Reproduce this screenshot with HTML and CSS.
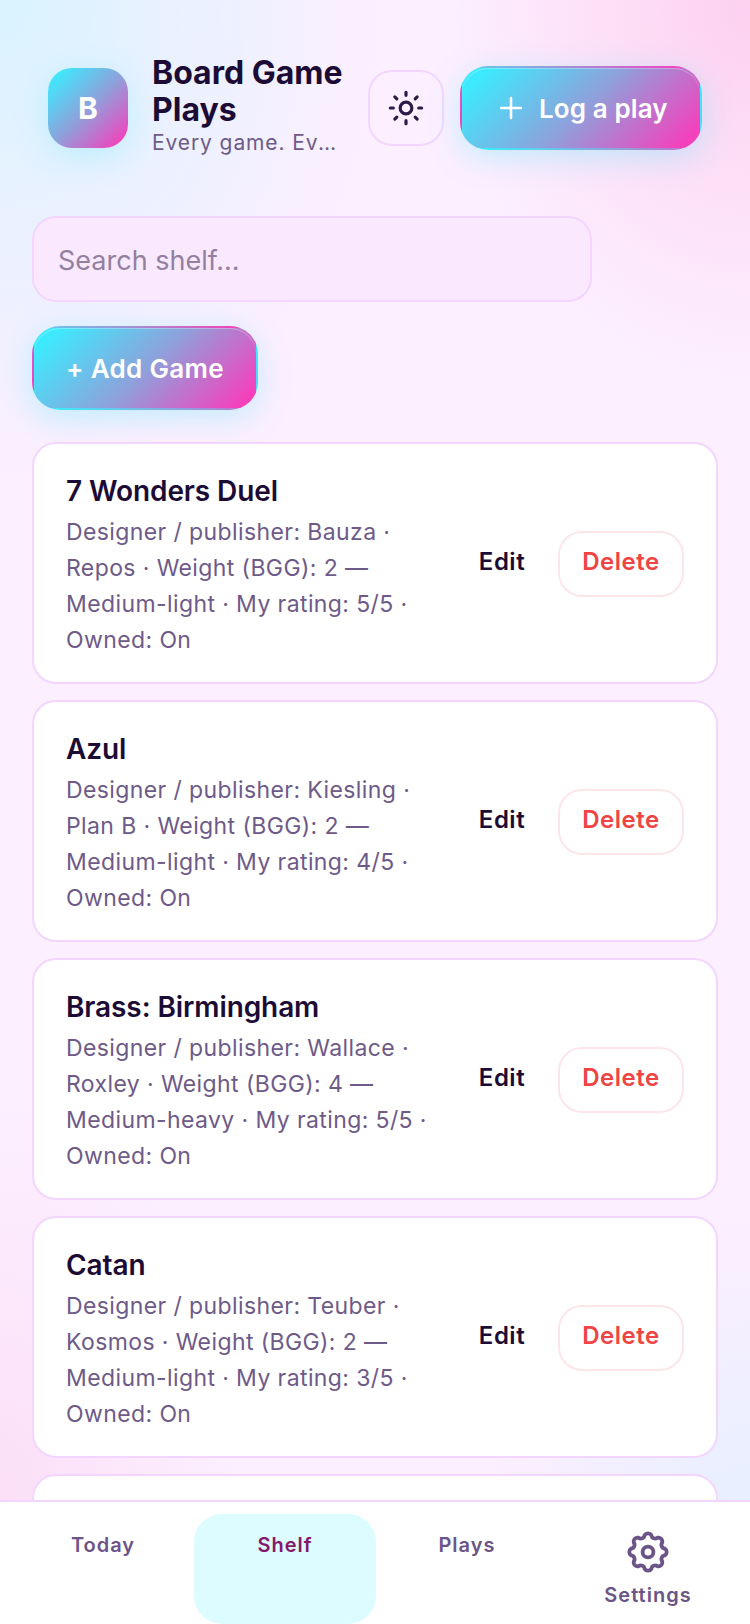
FILE: index.html
```html
<!DOCTYPE html>
<html lang="en">
<head>
  <meta charset="UTF-8">
  <meta name="viewport" content="width=device-width, initial-scale=1.0">
  <title>Board Game Plays</title>
  <link rel="stylesheet" href="styles.css">
</head>
<body>

  <div class="app">
    <main class="content">
      <header class="header">
        <div class="logo">B</div>
        <div class="brand">
          <h1>Board Game Plays</h1>
          <p>Every game. Every play.</p>
        </div>
        <button type="button" class="theme-button" aria-label="Theme">
          <svg width="40" height="40" viewBox="0 0 24 24" fill="none" stroke="#2a1a45" stroke-width="1.9" stroke-linecap="round">
            <circle cx="12" cy="12" r="3.5"/>
            <path d="M12 2.6v1.8M12 19.6v1.8M2.6 12h1.8M19.6 12h1.8M5.3 5.3l1.2 1.2M17.5 17.5l1.2 1.2M5.3 18.7l1.2-1.2M17.5 6.5l1.2-1.2"/>
          </svg>
        </button>
        <button type="button" class="grad-button log-button">
          <svg width="34" height="34" viewBox="0 0 24 24" fill="none" stroke="#fff" stroke-width="1.8" stroke-linecap="round">
            <path d="M5 12h14M12 5v14"/>
          </svg>
          Log a play
        </button>
      </header>

      <input class="search" type="text" placeholder="Search shelf...">

      <button type="button" class="grad-button add-button">+ Add Game</button>

      <section class="game-list">
        <article class="game-card">
          <div class="game-info">
            <h3>7 Wonders Duel</h3>
            <p>Designer / publisher: Bauza · Repos · Weight (BGG): 2 — Medium-light · My rating: 5/5 · Owned: On</p>
          </div>
          <button type="button" class="edit-button">Edit</button>
          <button type="button" class="delete-button">Delete</button>
        </article>
        <article class="game-card">
          <div class="game-info">
            <h3>Azul</h3>
            <p>Designer / publisher: Kiesling · Plan B · Weight (BGG): 2 — Medium-light · My rating: 4/5 · Owned: On</p>
          </div>
          <button type="button" class="edit-button">Edit</button>
          <button type="button" class="delete-button">Delete</button>
        </article>
        <article class="game-card">
          <div class="game-info">
            <h3>Brass: Birmingham</h3>
            <p>Designer / publisher: Wallace · Roxley · Weight (BGG): 4 — Medium-heavy · My rating: 5/5 · Owned: On</p>
          </div>
          <button type="button" class="edit-button">Edit</button>
          <button type="button" class="delete-button">Delete</button>
        </article>
        <article class="game-card">
          <div class="game-info">
            <h3>Catan</h3>
            <p>Designer / publisher: Teuber · Kosmos · Weight (BGG): 2 — Medium-light · My rating: 3/5 · Owned: On</p>
          </div>
          <button type="button" class="edit-button">Edit</button>
          <button type="button" class="delete-button">Delete</button>
        </article>
        <!-- next card is cut off by the tab bar, nothing of it shows but its top edge -->
        <article class="game-card"></article>
      </section>
    </main>

    <nav class="tabs">
      <a class="tab">Today</a>
      <a class="tab tab-active">Shelf</a>
      <a class="tab">Plays</a>
      <a class="tab tab-settings">
        <svg width="48" height="48" viewBox="0 0 24 24" fill="none" stroke="#6b5487" stroke-width="1.9" stroke-linejoin="round">
          <path d="M10.32 3.56A2 2 0 0 1 13.68 3.56A1.9 1.9 0 0 0 16.78 4.85A2 2 0 0 1 19.15 7.22A1.9 1.9 0 0 0 20.44 10.32A2 2 0 0 1 20.44 13.68A1.9 1.9 0 0 0 19.15 16.78A2 2 0 0 1 16.78 19.15A1.9 1.9 0 0 0 13.68 20.44A2 2 0 0 1 10.32 20.44A1.9 1.9 0 0 0 7.22 19.15A2 2 0 0 1 4.85 16.78A1.9 1.9 0 0 0 3.56 13.68A2 2 0 0 1 3.56 10.32A1.9 1.9 0 0 0 4.85 7.22A2 2 0 0 1 7.22 4.85A1.9 1.9 0 0 0 10.32 3.56Z"/>
          <circle cx="12" cy="12" r="2.7"/>
        </svg>
        Settings
      </a>
    </nav>
  </div>

</body>
</html>
```

FILE: styles.css
```css
* {
  box-sizing: border-box;
}

html, body {
  margin: 0;
  height: 100%;
}

body {
  font-family: Inter, "Liberation Sans", sans-serif;
  color: #1a0b2e;
  overflow: hidden;
}

button {
  font-family: inherit;
  cursor: pointer;
}

.app {
  height: 1624px;
  display: flex;
  flex-direction: column;
  background:
    radial-gradient(ellipse 380px 480px at 0 0, #d9f3ff, rgba(217, 243, 255, 0) 100%),
    radial-gradient(ellipse 300px 380px at 100% 0, #fdd0f0, rgba(253, 208, 240, 0) 100%),
    radial-gradient(ellipse 240px 400px at 0 1500px, #fbdff7, rgba(251, 223, 247, 0) 100%),
    radial-gradient(ellipse 260px 300px at 100% 1520px, #e6efff, rgba(230, 239, 255, 0) 100%),
    #fcefff;
}

.content {
  flex: 1;
  min-height: 0;
  overflow: hidden;
  padding: 54px 32px 0;
}

.header {
  display: flex;
  align-items: center;
  gap: 24px;
  margin: 0 16px 54px;
}

.logo {
  flex: none;
  width: 80px;
  height: 80px;
  border-radius: 24px;
  display: flex;
  align-items: center;
  justify-content: center;
  background: linear-gradient(135deg, #3deafd 8%, #8da2dc 50%, #f540bb 94%);
  box-shadow: 0 8px 32px rgba(62, 233, 251, 0.25);
  color: white;
  font-size: 30px;
  font-weight: 700;
}

.brand {
  flex: 1;
  min-width: 0;
  padding-bottom: 6px;
}

.brand h1 {
  margin: 0;
  font-size: 32px;
  line-height: 37px;
  font-weight: 700;
  color: #1c0c35;
}

.brand p {
  margin: 2px 0 0;
  font-size: 21px;
  line-height: 26px;
  letter-spacing: 0.9px;
  color: #6e5a88;
  white-space: nowrap;
  overflow: hidden;
  text-overflow: ellipsis;
}

.theme-button {
  flex: none;
  width: 76px;
  height: 76px;
  margin-right: -8px;
  padding: 0;
  border: 2px solid #f3d6ff;
  border-radius: 24px;
  background: #fcefff;
  display: flex;
  align-items: center;
  justify-content: center;
}

.grad-button {
  height: 84px;
  border: 2px solid transparent;
  border-radius: 28px;
  background: linear-gradient(135deg, #3deafd 8%, #8da2dc 50%, #f540bb 94%);
  box-shadow: 0 8px 32px rgba(62, 233, 251, 0.3), inset 0 1px 0 rgba(255, 255, 255, 0.3);
  color: white;
  font-size: 26px;
  font-weight: 600;
  letter-spacing: 0.3px;
}

.log-button {
  flex: none;
  width: 242px;
  display: flex;
  align-items: center;
  gap: 11px;
  padding: 0 0 0 32px;
  letter-spacing: 0.1px;
}

.search {
  display: block;
  width: 560px;
  height: 86px;
  padding: 2px 24px 0;
  border: 2px solid #f3d6ff;
  border-radius: 24px;
  background: #fae8ff;
  font-family: inherit;
  font-size: 27px;
  color: #1a0b2e;
}

.search::placeholder {
  color: #93809f;
  opacity: 1;
}

.add-button {
  display: block;
  width: 226px;
  margin: 24px 0 32px;
  padding: 0;
}

.game-list {
  display: flex;
  flex-direction: column;
  gap: 16px;
}

.game-card {
  flex: none;
  height: 242px;
  display: flex;
  align-items: center;
  padding: 0 32px;
  background: white;
  border: 2px solid #f3d6ff;
  border-radius: 24px;
}

.game-info {
  flex: 1;
  min-width: 0;
  padding: 6px 24px 0 0;
}

.game-info h3 {
  margin: 0 0 6px;
  font-size: 28px;
  line-height: 34px;
  font-weight: 600;
  letter-spacing: -0.1px;
  color: #1c0c35;
}

.game-info p {
  margin: 0;
  font-size: 23px;
  line-height: 36px;
  letter-spacing: 0.4px;
  color: #6e5a88;
}

.edit-button {
  flex: none;
  width: 90px;
  height: 66px;
  margin: 1px 11px 0 0;
  padding: 0 0 4px;
  border: none;
  background: none;
  font-size: 24px;
  font-weight: 600;
  letter-spacing: 0.5px;
  color: #1c0c35;
}

.delete-button {
  flex: none;
  width: 126px;
  height: 66px;
  margin-top: 1px;
  padding: 0 0 4px;
  border: 2px solid #fde6ea;
  border-radius: 24px;
  background: white;
  font-size: 24px;
  font-weight: 600;
  letter-spacing: 0.5px;
  color: #ef4444;
}

.tabs {
  flex: none;
  height: 124px;
  display: grid;
  grid-template-columns: repeat(4, 182px);
  padding: 12px 12px 0;
  background: white;
  border-top: 2px solid #f3d6ff;
}

.tab {
  display: flex;
  flex-direction: column;
  align-items: center;
  padding-top: 19px;
  border-radius: 28px;
  font-size: 20px;
  line-height: 24px;
  font-weight: 600;
  letter-spacing: 1px;
  color: #6b5487;
}

.tab-active {
  background: #dcfcff;
  color: #86186b;
}

.tab-settings {
  padding-top: 14px;
  margin-right: 2px;
  gap: 7px;
}
```
